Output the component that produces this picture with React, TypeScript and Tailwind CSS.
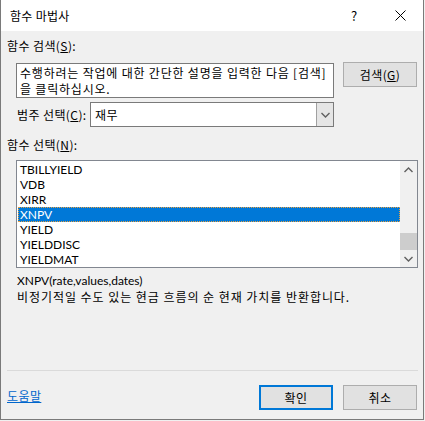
import React from 'react';

const items = ['TBILLYIELD', 'VDB', 'XIRR', 'XNPV', 'YIELD', 'YIELDDISC', 'YIELDMAT'];

const Chevron = ({ up }: { up?: boolean }) => (
    <svg width="9" height="6" viewBox="0 0 9 6" className="block">
        <path
            d={up ? 'M0.5 5 L4.5 1 L8.5 5' : 'M0.5 1 L4.5 5 L8.5 1'}
            fill="none"
            stroke="#606060"
            strokeWidth="1.4"
        />
    </svg>
);

export default function App() {
    return (
        <div className="w-[425px] h-[421px] bg-[#f0f0f0] font-['Noto_Sans_CJK_KR',sans-serif] text-[12px] leading-[16px] text-black">
            <div className="w-[424px] h-[420px] flex flex-col border-x border-b border-[#7a7a7a] bg-[#f0f0f0]">
                {/* title bar */}
                <div className="h-[31px] bg-white flex items-center shrink-0">
                    <span className="ml-[9px] tracking-[0.3px]">함수 마법사</span>
                    <div className="ml-auto flex h-full">
                        <div className="w-[46px] h-full flex items-center justify-center text-[13px]">?</div>
                        <div className="w-[46px] h-full flex items-center justify-center">
                            <svg width="11" height="11" viewBox="0 0 11 11">
                                <path d="M0.5 0.5 L10.5 10.5 M10.5 0.5 L0.5 10.5" stroke="#000" strokeWidth="1" />
                            </svg>
                        </div>
                    </div>
                </div>

                <div className="flex flex-col flex-1 pl-[6px] pr-[6px] tracking-[0.4px]">
                    <div className="mt-[7px]">
                        함수 검색(<u>S</u>):
                    </div>

                    <div className="flex items-start mt-[8px]">
                        <div className="ml-[9px] mt-px w-[318px] h-[35px] bg-white border border-[#7a7a7a] px-[3px] pt-px leading-[15.5px] tracking-[0.8px]">
                            수행하려는 작업에 대한 간단한 설명을 입력한 다음 [검색]
                            <br />을 클릭하십시오.
                        </div>
                        <button className="ml-[9px] w-[74px] h-[25px] bg-[#e1e1e1] border border-[#adadad] flex items-center justify-center">
                            검색(<u>G</u>)
                        </button>
                    </div>

                    <div className="flex items-center mt-[4px] h-[25px]">
                        <span className="ml-[10px] w-[73px]">
                            범주 선택(<u>C</u>):
                        </span>
                        <div className="w-[244px] h-[25px] flex bg-white border border-[#7a7a7a]">
                            <span className="pl-[4px] flex items-center flex-1">재무</span>
                            <div className="w-[17px] h-full bg-[#e5e5e5] border-l border-[#a0a0a0] flex items-center justify-center">
                                <Chevron />
                            </div>
                        </div>
                    </div>

                    <div className="mt-[10px]">
                        함수 선택(<u>N</u>):
                    </div>

                    <div className="ml-[9px] mt-[7px] w-[402px] h-[108px] bg-white border border-[#828790] flex tracking-normal font-['Lato',sans-serif]">
                        <div className="flex-1 pt-px">
                            {items.map((name) => (
                                <div
                                    key={name}
                                    className={
                                        name === 'XNPV'
                                            ? 'ml-px h-[15px] leading-[15px] pl-[2px] bg-[#0078d7] text-white outline-1 outline-dotted outline-[#e8a040] -outline-offset-1'
                                            : 'ml-px h-[15px] leading-[15px] pl-[2px]'
                                    }
                                >
                                    {name}
                                </div>
                            ))}
                        </div>
                        <div className="w-[17px] h-full bg-[#f0f0f0] flex flex-col items-center">
                            <div className="h-[17px] flex items-center justify-center">
                                <Chevron up />
                            </div>
                            <div className="flex-1 w-full relative">
                                <div className="absolute left-0 right-0 top-[55px] h-[17px] bg-[#cdcdcd]" />
                            </div>
                            <div className="h-[17px] flex items-center justify-center">
                                <Chevron />
                            </div>
                        </div>
                    </div>

                    <div className="ml-[10px] mt-[5px] tracking-normal font-['Lato',sans-serif]">XNPV(rate,values,dates)</div>
                    <div className="ml-[10px] tracking-[0.95px]">비정기적일 수도 있는 현금 흐름의 순 현재 가치를 반환합니다.</div>

                    <div className="flex-1" />

                    <div className="h-px bg-[#dadada] mr-[-1px]" />

                    <div className="flex items-center mt-[14px] mb-[9px] h-[25px]">
                        <a className="text-[#0066cc] underline mt-[-3px]">도움말</a>
                        <button className="ml-auto w-[74px] h-[25px] bg-[#e1e1e1] border-2 border-[#0078d7] flex items-center justify-center">
                            확인
                        </button>
                        <button className="ml-[10px] w-[74px] h-[25px] bg-[#e1e1e1] border border-[#adadad] flex items-center justify-center">
                            취소
                        </button>
                    </div>
                </div>
            </div>
        </div>
    );
}
